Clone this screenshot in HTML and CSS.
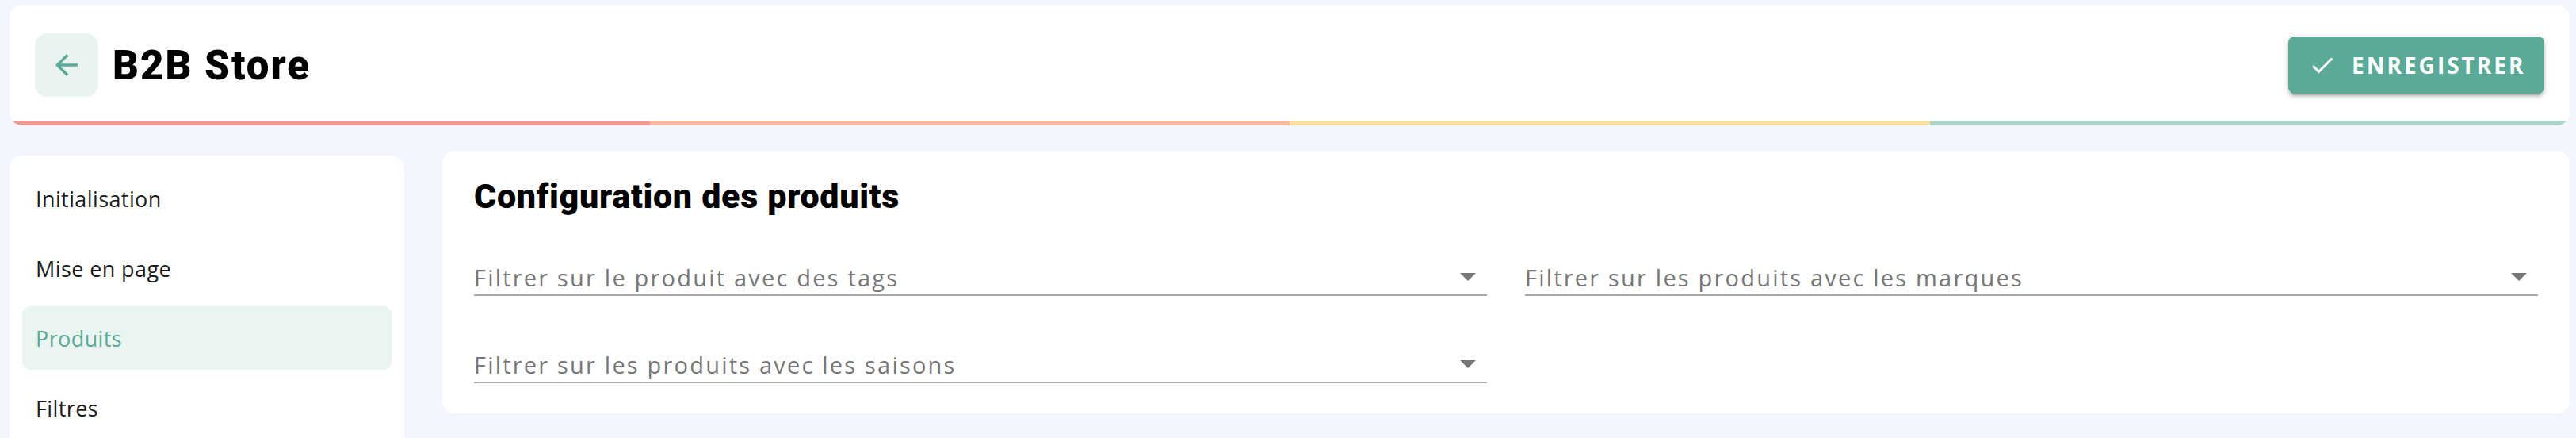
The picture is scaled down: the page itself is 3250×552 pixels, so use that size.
FILE: index.html
```html
<!DOCTYPE html>
<html lang="fr">
<head>
<meta charset="utf-8">
<title>B2B Store</title>
<link rel="stylesheet" href="styles.css">
</head>
<body>
<div class="page">
  <header class="header-card">
    <div class="header-row">
      <div class="header-left">
        <button class="back-btn" aria-label="Retour">
          <svg viewBox="0 0 24 24" width="42" height="42"><path fill="#5aaa97" d="M20 11H7.83l5.59-5.59L12 4l-8 8 8 8 1.41-1.41L7.83 13H20v-2z"/></svg>
        </button>
        <h1 class="title">B2B Store</h1>
      </div>
      <button class="save-btn">
        <svg viewBox="0 0 24 24" width="36" height="36"><path fill="#ffffff" d="M9 16.17L4.83 12l-1.42 1.41L9 19 21 7l-1.41-1.41z"/></svg>
        <span>ENREGISTRER</span>
      </button>
    </div>
    <div class="progress">
      <span class="seg seg-red"></span>
      <span class="seg seg-salmon"></span>
      <span class="seg seg-yellow"></span>
      <span class="seg seg-teal"></span>
    </div>
  </header>

  <div class="content">
    <nav class="sidebar">
      <a class="nav-item">Initialisation</a>
      <a class="nav-item">Mise en page</a>
      <a class="nav-item active">Produits</a>
      <a class="nav-item">Filtres</a>
    </nav>

    <main class="main-card">
      <h2 class="section-title">Configuration des produits</h2>
      <div class="fields">
        <div class="field">
          <span class="placeholder">Filtrer sur le produit avec des tags</span>
          <svg class="caret" viewBox="0 0 20 10" width="20" height="10"><path fill="#777777" d="M0 0h20L10 10z"/></svg>
        </div>
        <div class="field">
          <span class="placeholder">Filtrer sur les produits avec les marques</span>
          <svg class="caret" viewBox="0 0 20 10" width="20" height="10"><path fill="#777777" d="M0 0h20L10 10z"/></svg>
        </div>
        <div class="field">
          <span class="placeholder">Filtrer sur les produits avec les saisons</span>
          <svg class="caret" viewBox="0 0 20 10" width="20" height="10"><path fill="#777777" d="M0 0h20L10 10z"/></svg>
        </div>
      </div>
    </main>
  </div>
</div>
</body>
</html>
```
FILE: styles.css
```css
* { box-sizing: border-box; }

html, body {
  margin: 0;
  padding: 0;
  background: #f3f6fe;
  font-family: "Open Sans", "Noto Sans", sans-serif;
  overflow: hidden;
}

.page {
  padding: 6px 8px 0 12px;
  height: 552px;
}

.header-card {
  background: #ffffff;
  border-radius: 16px;
  overflow: hidden;
}

.header-row {
  display: flex;
  align-items: center;
  justify-content: space-between;
  padding: 36px 32px 30px 32px;
}

.header-left {
  display: flex;
  align-items: center;
  gap: 18px;
}

.back-btn {
  width: 80px;
  height: 80px;
  border: none;
  border-radius: 16px;
  background: #e9f4f1;
  display: flex;
  align-items: center;
  justify-content: center;
  padding: 0;
}

.title {
  margin: 0;
  font-family: Roboto, "Liberation Sans", sans-serif;
  font-weight: 900;
  font-size: 51px;
  line-height: 1;
  color: #000;
  letter-spacing: 2px;
}

.save-btn {
  height: 72px;
  width: 323px;
  border: none;
  border-radius: 8px;
  background: #5aaa97;
  color: #fff;
  display: flex;
  align-items: center;
  padding: 0 0 0 25px;
  gap: 19px;
  box-shadow: 0 6px 2px -4px rgba(0,0,0,.2), 0 4px 4px 0 rgba(0,0,0,.14), 0 2px 10px 0 rgba(0,0,0,.12);
  font-family: "Open Sans", sans-serif;
  font-weight: 700;
  font-size: 28px;
  letter-spacing: 3px;
}

.progress {
  display: flex;
  height: 6px;
}
.seg { flex: 1; }
.seg-red { background: #ec9a93; }
.seg-salmon { background: #f7b8a4; }
.seg-yellow { background: #fbdfa3; }
.seg-teal { background: #abd4ca; }

.content {
  display: flex;
  align-items: flex-start;
  gap: 48px;
  margin-top: 32px;
}

.sidebar {
  width: 498px;
  flex: none;
  margin-top: 6px;
  background: #fff;
  border-radius: 16px 16px 0 0;
  padding: 14px 16px 0 16px;
  display: flex;
  flex-direction: column;
  gap: 8px;
  height: 356px;
  overflow: hidden;
}

.nav-item {
  height: 80px;
  flex: none;
  display: flex;
  align-items: center;
  padding-left: 17px;
  border-radius: 10px;
  font-size: 27px;
  letter-spacing: 0.4px;
  color: #1c1c1c;
}

.nav-item.active {
  background: #eaf4f1;
  color: #5aaa97;
}

.main-card {
  flex: 1;
  background: #fff;
  border-radius: 16px;
  padding: 36px 40px 38px 40px;
}

.section-title {
  margin: 0;
  font-family: Roboto, "Liberation Sans", sans-serif;
  font-weight: 900;
  font-size: 43px;
  line-height: 43px;
  color: #000;
  letter-spacing: 0.7px;
}

.fields {
  display: grid;
  grid-template-columns: 1fr 1fr;
  column-gap: 48px;
  row-gap: 46px;
  margin-top: 40px;
}

.field {
  height: 64px;
  display: flex;
  align-items: flex-end;
  justify-content: space-between;
  padding-bottom: 2px;
  border-bottom: 2px solid #a8a8a8;
}

.placeholder {
  font-size: 29px;
  color: #777777;
  line-height: normal;
  letter-spacing: 2.2px;
}

.caret {
  margin-right: 14px;
  margin-bottom: 15px;
}
```
